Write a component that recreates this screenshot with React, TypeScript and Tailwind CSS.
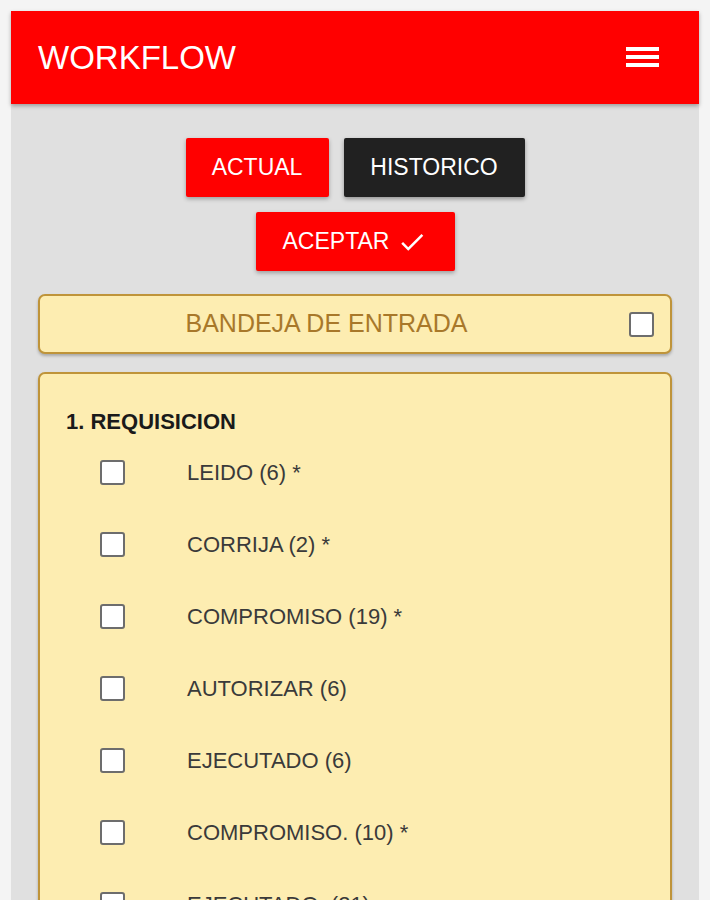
import React from "react";

const items = [
  "LEIDO (6) *",
  "CORRIJA (2) *",
  "COMPROMISO (19) *",
  "AUTORIZAR (6)",
  "EJECUTADO (6)",
  "COMPROMISO. (10) *",
  "EJECUTADO. (21)",
];

function Box() {
  return <span className="block w-[25px] h-[25px] shrink-0 rounded-[3px] border-2 border-[#6d6d6d] bg-white" />;
}

export default function App() {
  return (
    <div className="min-h-[900px] bg-[#f4f4f4] p-[11px] pb-0 font-['Liberation_Sans',Arial,sans-serif]">
      <div className="min-h-[889px] bg-[#e0e0e0]">
        <header className="h-[93px] bg-[#ff0000] flex items-center justify-between pl-[27px] pr-[40px] shadow-[0_2px_4px_rgba(0,0,0,0.3)]">
          <h1 className="text-white text-[33px] leading-none">WORKFLOW</h1>
          <svg width="33" height="24" viewBox="0 0 33 24" className="mt-[2px]">
            <rect x="0" y="0" width="33" height="4" fill="white" />
            <rect x="0" y="8" width="33" height="4" fill="white" />
            <rect x="0" y="16" width="33" height="4" fill="white" />
          </svg>
        </header>

        <div className="flex flex-col items-center gap-[15px] pt-[34px]">
          <div className="flex gap-[15px]">
            <button className="h-[59px] w-[143px] rounded-[2px] bg-[#ff0000] text-white text-[23px] shadow-[0_2px_4px_rgba(0,0,0,0.3)]">
              ACTUAL
            </button>
            <button className="h-[59px] w-[181px] rounded-[2px] bg-[#212121] text-white text-[23px] shadow-[0_2px_4px_rgba(0,0,0,0.35)]">
              HISTORICO
            </button>
          </div>
          <button className="h-[59px] w-[199px] rounded-[2px] bg-[#ff0000] text-white text-[23px] flex items-center justify-center gap-[8px] shadow-[0_2px_4px_rgba(0,0,0,0.3)]">
            ACEPTAR
            <svg width="30" height="30" viewBox="0 0 24 24">
              <path d="M9 16.17L4.83 12l-1.42 1.41L9 19 21 7l-1.41-1.41z" fill="white" />
            </svg>
          </button>
        </div>

        <div className="px-[27px] pt-[23px] flex flex-col gap-[18px]">
          <div className="h-[60px] rounded-[7px] border-2 border-[#bf943a] bg-[#fdedb1] flex items-center pl-[4px] pr-[16px] shadow-[0_2px_3px_rgba(0,0,0,0.25)]">
            <span className="flex-1 mr-[20px] text-center text-[25px] text-[#a8782a]">BANDEJA DE ENTRADA</span>
            <Box />
          </div>

          <div className="rounded-[7px] border-2 border-[#bf943a] bg-[#fdedb1] pt-[34px] pl-[26px] pb-[20px] shadow-[0_2px_3px_rgba(0,0,0,0.25)]">
            <div className="text-[22px] font-bold text-[#1a1a1a] leading-[28px]">1. REQUISICION</div>
            <div className="flex flex-col">
              {items.map((t) => (
                <div key={t} className="h-[72px] flex items-center pl-[34px]">
                  <Box />
                  <span className="ml-[62px] text-[22px] text-[#3a3a3a]">{t}</span>
                </div>
              ))}
            </div>
          </div>
        </div>
      </div>
    </div>
  );
}
